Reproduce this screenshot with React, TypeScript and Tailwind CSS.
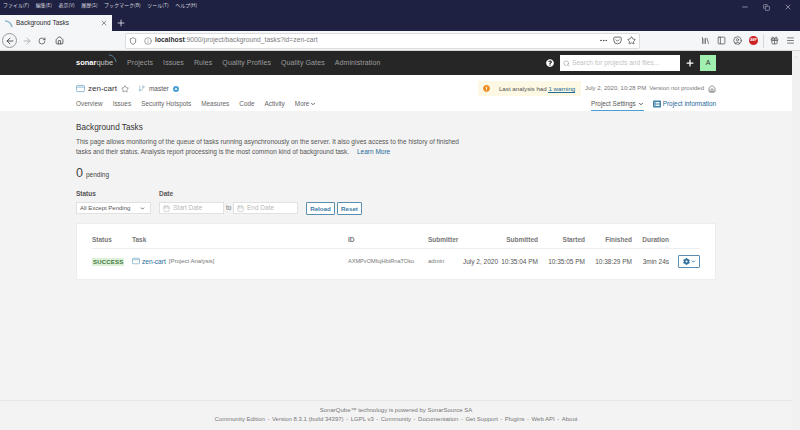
import { ArrowLeft, ArrowRight, ChevronDown, ChevronUp, Copy, Ellipsis, Home, Info, Library, Menu, Minus, PanelLeft, Plus, RotateCw, Search, Shield, Star, UserCircle, X, Gift, Calendar, GitBranch, Pocket } from 'lucide-react'
import { FaCog, FaExclamationCircle, FaListAlt, FaQuestionCircle } from 'react-icons/fa'

const browserMenu = ['ファイル(F)', '編集(E)', '表示(V)', '履歴(S)', 'ブックマーク(B)', 'ツール(T)', 'ヘルプ(H)']
const mainNav = ['Projects', 'Issues', 'Rules', 'Quality Profiles', 'Quality Gates', 'Administration']
const projectNav = ['Overview', 'Issues', 'Security Hotspots', 'Measures', 'Code', 'Activity']
const footerLinks = ['Community Edition', 'Version 8.3.1 (build 34397)', 'LGPL v3', 'Community', 'Documentation', 'Get Support', 'Plugins', 'Web API', 'About']

function ProjectIcon({ size }: { size: number }) {
  return (
    <svg width={size} height={size} viewBox="0 0 16 16" fill="none" stroke="#7fb0cc" strokeWidth="1.5" className="shrink-0">
      <rect x="1" y="2.5" width="14" height="11" rx="1.5" />
      <path d="M1 5.5H15" />
    </svg>
  )
}

function BrowserChrome() {
  return (
    <div className="shrink-0">
      <div className="h-[31px] bg-[#1e2142] relative">
        <div className="flex gap-[6.5px] pl-[3px] text-[5px] leading-[10px] text-[#d5d6de] [font-family:'Noto_Sans_CJK_JP',sans-serif]">
          {browserMenu.map((m) => (
            <span key={m}>{m}</span>
          ))}
        </div>
        <div className="absolute right-0 top-[3px] flex items-center gap-[14px] pr-[8px] text-[#b9bbc9]">
          <Minus size={8} />
          <Copy size={7} />
          <X size={8} />
        </div>
        <div className="absolute left-0 top-[15px] flex items-center">
          <div className="w-[112px] h-[16px] bg-[#f5f6f7] flex items-center pl-[4px] pr-[4px] text-[#2c2c30]">
            <svg width="9" height="9" viewBox="0 0 9 9" className="mr-[3px]" fill="none">
              <path d="M1 2C4 2 7 4 8 8" stroke="#8fb7cf" strokeWidth="1.6" />
            </svg>
            <span className="text-[6.5px] flex-1">Background Tasks</span>
            <X size={8} strokeWidth={1.5} />
          </div>
          <Plus size={10} className="ml-[4px] text-[#e4e5ec]" />
        </div>
      </div>
      <div className="h-[20px] bg-[#f5f6f7] flex items-center border-b border-[#d4d4d6] text-[#3c3c42]">
        <div className="ml-[2px] w-[15px] h-[15px] rounded-full border border-[#9a9a9e] flex items-center justify-center">
          <ArrowLeft size={10} />
        </div>
        <ArrowRight size={10} className="ml-[5px] text-[#a8a8ac]" />
        <RotateCw size={8} className="ml-[6px]" />
        <Home size={9} className="ml-[8.5px]" />
        <div className="ml-[61.5px] w-[515px] h-[16px] bg-white border border-[#dcdcde] rounded-[2px] flex items-center text-[#7d7d82]">
          <Shield size={8} className="ml-[3px] text-[#55555a]" />
          <Info size={8} className="ml-[7px]" />
          <span className="ml-[3px] text-[6.75px]">
            <span className="text-[#2b2b30] font-bold">localhost</span>:9000/project/background_tasks?id=zen-cart
          </span>
          <div className="ml-auto flex items-center gap-[5px] pr-[3px] text-[#45454a]">
            <Ellipsis size={9} />
            <Pocket size={9} />
            <Star size={9} />
          </div>
        </div>
        <div className="ml-auto flex items-center text-[#55555a] pr-[5.5px]">
          <Library size={9} />
          <PanelLeft size={9} className="ml-[7px]" />
          <UserCircle size={9} className="ml-[7px]" />
          <div className="ml-[7px] w-[9px] h-[9px] rounded-full bg-[#cc2222] text-white text-[3px] flex items-center justify-center font-bold">
            ABP
          </div>
          <div className="ml-[4.5px] h-[14px] w-px bg-[#d8d8da]" />
          <Gift size={9} className="ml-[6px]" />
          <Menu size={9} className="ml-[7px]" />
        </div>
      </div>
    </div>
  )
}

function SonarNav() {
  return (
    <div className="h-[24px] bg-[#262626] flex items-center pl-[76px] text-[#9d9d9d] shrink-0">
      <div className="w-[41px] text-white text-[7.5px] relative whitespace-nowrap">
        <span className="font-bold">sonar</span>
        <span className="text-[#c5c5c5]">qube</span>
        <svg width="9" height="9" viewBox="0 0 9 9" fill="none" className="absolute right-0 top-[-3px]">
          <path d="M1 1C4 1 7 3 8 8" stroke="#5b8aa5" strokeWidth="1" />
        </svg>
      </div>
      <div className="flex gap-[10px] ml-[10px] text-[7px] tracking-[0.1px]">
        {mainNav.map((n) => (
          <span key={n}>{n}</span>
        ))}
      </div>
      <div className="ml-auto flex items-center">
        <FaQuestionCircle size={8} className="text-white mr-[6px]" />
        <div className="w-[120px] h-[16px] bg-white flex items-center text-[#c3c3c3] pl-[3px]">
          <Search size={7} className="text-[#9b9b9b] mr-[2px]" />
          <span className="text-[6.6px]">Search for projects and files...</span>
        </div>
        <Plus size={10} strokeWidth={3} className="ml-[5px] text-white" />
        <div className="ml-[5px] mr-[76px] w-[16px] h-[16px] bg-[#a2f0b0] flex items-center justify-center text-[7px] text-[#333]">
          A
        </div>
      </div>
    </div>
  )
}

function ProjectHeader() {
  return (
    <div className="h-[36px] bg-white px-[76px] shrink-0 flex flex-col text-[#555]">
      <div className="h-[22px] flex items-center pt-[5px]">
        <ProjectIcon size={9} />
        <span className="ml-[3px] text-[8px] text-[#333]">zen-cart</span>
        <Star size={8} className="ml-[4px] text-[#777]" />
        <GitBranch size={7} className="ml-[9px] text-[#8db3c9]" />
        <span className="ml-[4px] text-[6.5px]">master</span>
        <div className="ml-[4px] w-[6px] h-[6px] rounded-full border-[2px] border-[#4b9fd5]" />
        <div className="ml-auto h-[15px] w-[103px] bg-[#fcf8e3] flex items-center pl-[5px] text-[6.2px] text-[#555] whitespace-nowrap">
          <FaExclamationCircle size={7} className="text-[#ed8b20] shrink-0" />
          <span className="ml-[9px]">
            Last analysis had <span className="text-[#236a97] border-b border-[#236a97]">1 warning</span>
          </span>
        </div>
        <span className="ml-[4px] text-[6px] text-[#777] whitespace-nowrap">July 2, 2020, 10:28 PM</span>
        <span className="ml-[3px] text-[6px] text-[#777] whitespace-nowrap">Version not provided</span>
        <Home size={8} className="ml-[4px] text-[#555]" />
      </div>
      <div className="h-[14px] flex items-center text-[6.4px] text-[#666]">
        <div className="flex items-center gap-[10px]">
          {projectNav.map((n) => (
            <span key={n}>{n}</span>
          ))}
          <span className="flex items-center">
            More
            <ChevronDown size={6} strokeWidth={4} className="ml-px" />
          </span>
        </div>
        <div className="ml-auto flex items-center h-full">
          <span className="h-full flex items-center border-b-[1.5px] border-[#4b9fd5] text-[#555]">
            Project Settings
            <ChevronDown size={6} strokeWidth={4} className="ml-[2px]" />
          </span>
          <FaListAlt size={8} className="ml-[9px] text-[#3f83ad]" />
          <span className="ml-[2px] text-[#236a97]">Project information</span>
        </div>
      </div>
    </div>
  )
}

function TasksCard() {
  return (
    <div className="mt-[8px] h-[57px] bg-white border border-[#ededed] px-[15px] text-[#777]">
      <div className="h-[25px] pt-[7px] flex items-center border-b border-[#eeeeee] text-[6.5px] font-bold text-[#777] whitespace-nowrap">
        <span className="w-[40px] shrink-0">Status</span>
        <span className="w-[216px] shrink-0">Task</span>
        <span className="w-[80px] shrink-0">ID</span>
        <span className="w-[70px] shrink-0">Submitter</span>
        <span className="w-[40px] shrink-0 text-right">Submitted</span>
        <span className="w-[47px] shrink-0 text-right">Started</span>
        <span className="w-[47px] shrink-0 text-right">Finished</span>
        <span className="w-[37px] shrink-0 text-right">Duration</span>
      </div>
      <div className="h-[25px] flex items-center text-[6.5px] whitespace-nowrap">
        <span className="w-[40px] shrink-0">
          <span className="bg-[#dff0d8] text-[#3c763d] text-[6px] font-bold px-[1px] py-px tracking-[0.2px]">SUCCESS</span>
        </span>
        <span className="w-[216px] shrink-0 flex items-center">
          <ProjectIcon size={8} />
          <span className="ml-[2px] text-[6.6px] text-[#236a97]">zen-cart</span>
          <span className="ml-[3px] text-[6px]">[Project Analysis]</span>
        </span>
        <span className="w-[80px] shrink-0 text-[5.6px]">AXMPvOMfojHbtRnaTOko</span>
        <span className="w-[35px] shrink-0 text-[6px]">admin</span>
        <span className="w-[35px] shrink-0 text-[#555] text-right">July 2, 2020</span>
        <span className="w-[40px] shrink-0 text-[#555] text-right">10:35:04 PM</span>
        <span className="w-[47px] shrink-0 text-[#555] text-right">10:35:05 PM</span>
        <span className="w-[47px] shrink-0 text-[#555] text-right">10:38:29 PM</span>
        <span className="w-[37px] shrink-0 text-[#555] text-right">3min 24s</span>
        <div className="ml-[9px] w-[22px] h-[13px] shrink-0 border border-[#5a8fb0] rounded-[1px] flex items-center justify-center gap-px text-[#236a97]">
          <FaCog size={7} />
          <ChevronDown size={5} strokeWidth={4} />
        </div>
      </div>
    </div>
  )
}

function MainContent() {
  return (
    <div className="flex-1 flex flex-col bg-[#f3f3f3] min-h-0">
      <div className="flex-1 px-[76px] pt-[11px]">
        <h1 className="text-[8.2px] leading-[12px] text-[#333]">Background Tasks</h1>
        <p className="mt-[3px] w-[392px] text-[6.5px] leading-[10px] text-[#555]">
          This page allows monitoring of the queue of tasks running asynchronously on the server. It also gives access to the history of finished tasks and their status. Analysis report processing is the most common kind of background task.{' '}
          <span className="inline-block ml-[6px] text-[#236a97]">Learn More</span>
        </p>
        <div className="mt-[8px] h-[16px] flex items-baseline gap-[3px] text-[#444]">
          <span className="text-[12.5px] leading-[16px]">0</span>
          <span className="text-[6.5px]">pending</span>
        </div>
        <div className="mt-[8px] flex items-start">
          <div className="w-[83px] shrink-0">
            <div className="text-[6.5px] font-bold leading-[10px] text-[#555]">Status</div>
            <div className="mt-[3px] w-[75px] h-[12px] bg-white border border-[#e1e1e1] flex items-center justify-between pl-[3px] pr-[5px] text-[6px] text-[#555]">
              All Except Pending
              <ChevronDown size={5} strokeWidth={4} />
            </div>
          </div>
          <div>
            <div className="text-[6.5px] font-bold leading-[10px] text-[#555]">Date</div>
            <div className="mt-[3px] flex items-center text-[6.5px] text-[#b8b8b8]">
              <div className="w-[65px] h-[12px] bg-white border border-[#e1e1e1] flex items-center pl-[3px]">
                <Calendar size={7} className="mr-[3px]" />
                Start Date
              </div>
              <span className="mx-[2px] w-[5px] text-[#777]">to</span>
              <div className="w-[65px] h-[12px] bg-white border border-[#e1e1e1] flex items-center pl-[3px]">
                <Calendar size={7} className="mr-[3px]" />
                End Date
              </div>
            </div>
          </div>
          <div className="ml-[8px] mt-[13px] flex gap-[2px] text-[6.2px] font-bold text-[#3a7aa3]">
            <button className="w-[29px] h-[13px] border border-[#5a8fb0] rounded-[1px] bg-white leading-[11px]">Reload</button>
            <button className="w-[25px] h-[13px] border border-[#5a8fb0] rounded-[1px] bg-white leading-[11px]">Reset</button>
          </div>
        </div>
        <TasksCard />
      </div>
      <div className="h-[30px] border-t border-[#e6e6e6] flex flex-col items-center pt-[5px] text-[6px] leading-[9px] text-[#777]">
        <div>SonarQube™ technology is powered by SonarSource SA</div>
        <div className="flex gap-[2.5px]">
          {footerLinks.map((l, i) => (
            <span key={l}>
              {i > 0 && <span className="mr-[2.5px]">-</span>}
              {l}
            </span>
          ))}
        </div>
      </div>
    </div>
  )
}

export default function App() {
  return (
    <div className="w-[800px] h-[430px] overflow-hidden flex flex-col bg-white relative [font-family:'Liberation_Sans',Arial,sans-serif]">
      <BrowserChrome />
      <div className="flex-1 flex min-h-0">
        <div className="flex-1 flex flex-col min-w-0">
          <SonarNav />
          <ProjectHeader />
          <MainContent />
        </div>
        <div className="w-[8px] bg-[#f1f1f1] flex justify-center pt-[3px] text-[#c0c0c0]">
          <ChevronUp size={6} />
        </div>
      </div>
    </div>
  )
}
